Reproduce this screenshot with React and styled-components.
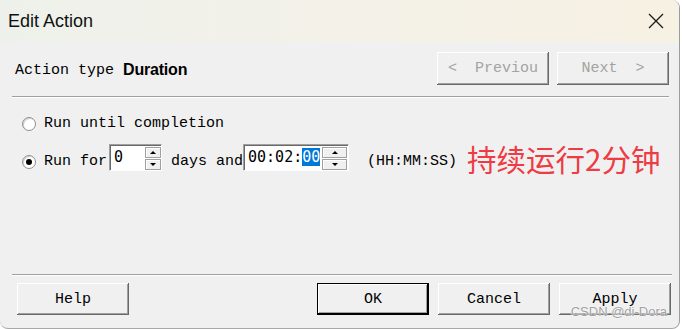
import React from 'react'
import styled, { createGlobalStyle } from 'styled-components'

const mono = `"Liberation Mono", "Courier New", monospace`
const sansMono = `"DejaVu Sans Mono", "Liberation Mono", monospace`
const sans = `"Liberation Sans", Arial, sans-serif`

const GlobalStyle = createGlobalStyle`
  html, body {
    margin: 0;
    padding: 0;
    background: #fff;
  }
  body {
    width: 682px;
    height: 329px;
    overflow: hidden;
  }
`

const Window = styled.div`
  position: relative;
  box-sizing: border-box;
  width: 680px;
  height: 329px;
  display: flex;
  flex-direction: column;
  background: #f0f0f0;
  border-right: 1px solid #9c9c9c;
  border-bottom: 1px solid #a8a8a8;
  border-radius: 0 8px 8px 8px;
  overflow: hidden;
  font-family: ${mono};
  font-size: 15px;
  color: #000;
`

const TitleBar = styled.div`
  height: 42px;
  flex: none;
  display: flex;
  align-items: center;
  justify-content: space-between;
  padding-left: 8px;
  background: linear-gradient(90deg, #eef1eb 0%, #f3f1e8 50%, #f7f1e3 100%);
`

const Title = styled.span`
  font-family: ${sans};
  font-size: 18px;
  color: #111;
`

const CloseButton = styled.div`
  width: 46px;
  height: 42px;
  display: flex;
  align-items: center;
  justify-content: center;
`

const HeaderRow = styled.div`
  display: flex;
  align-items: center;
  padding: 10px 10px 0 15px;
`

const ActionLabel = styled.span`
  white-space: pre;
  margin-top: 3px;
`

const ActionType = styled.span`
  font-family: ${sans};
  font-weight: bold;
  font-size: 16px;
  letter-spacing: -0.2px;
  margin-top: 2px;
`

const NavGroup = styled.div`
  display: flex;
  gap: 8px;
  margin-left: auto;
`

const Button = styled.button`
  box-sizing: border-box;
  width: 112px;
  height: ${({ $tall }) => ($tall ? 33 : 32)}px;
  padding: 0;
  font-family: ${mono};
  font-size: 15px;
  white-space: pre;
  color: ${({ $muted }) => ($muted ? '#a3a3a3' : '#000')};
  background: #f0f0f0;
  border: ${({ $primary }) => ($primary ? '1px solid #000' : 'none')};
  box-shadow: ${({ $primary }) =>
    $primary
      ? 'inset -1px -1px #000, inset 1px 1px #fff, inset -2px -2px #a0a0a0'
      : 'inset -1px -1px #696969, inset 1px 1px #fff, inset -2px -2px #a0a0a0'};
`

const Separator = styled.div`
  height: 0;
  border-top: 1px solid #a0a0a0;
  border-bottom: 1px solid #fff;
  margin: ${({ $margin }) => $margin};
`

const Options = styled.div`
  display: flex;
  flex-direction: column;
  padding: 16px 0 0 22px;
`

const OptionRow = styled.div`
  display: flex;
  align-items: center;
  height: ${({ $h }) => $h}px;
  margin-top: ${({ $mt }) => $mt || 0}px;
`

const Radio = styled.span`
  position: relative;
  box-sizing: border-box;
  width: 14px;
  height: 14px;
  flex: none;
  margin-right: 8px;
  border-radius: 50%;
  background: #fff;
  border: 1px solid #8e8e8e;
  box-shadow: inset 1px 1px #d0d0d0;
  &::after {
    content: '';
    display: ${({ $checked }) => ($checked ? 'block' : 'none')};
    position: absolute;
    left: 3px;
    top: 3px;
    width: 6px;
    height: 6px;
    border-radius: 50%;
    background: #000;
  }
`

const Text = styled.span`
  white-space: pre;
  line-height: 20px;
`

const SpinBox = styled.div`
  box-sizing: border-box;
  width: ${({ $w }) => $w}px;
  height: 27px;
  margin: 0 0 8px ${({ $ml }) => $ml || 0}px;
  display: flex;
  align-items: center;
  background: #fff;
  border-top: 1px solid #a0a0a0;
  border-left: 1px solid #a0a0a0;
  border-right: 1px solid #fff;
  border-bottom: 1px solid #fff;
  box-shadow: inset 1px 1px #696969;
`

const SpinValue = styled.span`
  flex: 1;
  padding-left: 4px;
  font-family: ${sansMono};
  font-size: 15px;
  line-height: 19px;
  white-space: pre;
`

const Selected = styled.span`
  background: #0078d7;
  color: #fff;
`

const SpinButtons = styled.div`
  display: flex;
  flex-direction: column;
  gap: 1px;
  width: ${({ $w }) => $w}px;
  margin-right: ${({ $mr }) => $mr || 0}px;
  margin-top: 1px;
`

const SpinButton = styled.div`
  box-sizing: border-box;
  height: 11px;
  display: flex;
  align-items: center;
  justify-content: center;
  background: #f0f0f0;
  border: 1px solid #a0a0a0;
  box-shadow: inset 1px 1px #fff;
`

const Arrow = styled.span`
  width: 0;
  height: 0;
  border-left: 3px solid transparent;
  border-right: 3px solid transparent;
  ${({ $down }) =>
    $down ? 'border-top: 3px solid #000;' : 'border-bottom: 3px solid #000;'}
`

const Note = styled.span`
  margin: 0 0 5px 10px;
  font-family: "Noto Sans CJK SC", sans-serif;
  font-size: 29.5px;
  line-height: 1;
  color: #ee3b44;
  white-space: nowrap;
`

const Spacer = styled.div`
  flex: 1;
`

const Footer = styled.div`
  display: flex;
  align-items: center;
  padding: 7px 8px 13px 17px;
`

const FooterGroup = styled.div`
  display: flex;
  gap: 9px;
  margin-left: auto;
`

const Watermark = styled.span`
  position: absolute;
  right: 12px;
  bottom: 9px;
  font-family: ${sans};
  font-size: 13px;
  color: #a0a0a0;
  text-shadow: 0 0 2px #fff, 0 0 1px #fff;
`

function Spin({ width, marginLeft, buttonWidth, buttonMargin, children }) {
  return (
    <SpinBox $w={width} $ml={marginLeft}>
      <SpinValue>{children}</SpinValue>
      <SpinButtons $w={buttonWidth} $mr={buttonMargin}>
        <SpinButton><Arrow /></SpinButton>
        <SpinButton><Arrow $down /></SpinButton>
      </SpinButtons>
    </SpinBox>
  )
}

export default function App() {
  return (
    <>
      <GlobalStyle />
      <Window>
        <TitleBar>
          <Title>Edit Action</Title>
          <CloseButton>
            <svg width="16" height="16" viewBox="0 0 16 16">
              <path d="M1 1 L15 15 M15 1 L1 15" stroke="#1a1a1a" strokeWidth="1.3" fill="none" />
            </svg>
          </CloseButton>
        </TitleBar>

        <HeaderRow>
          <ActionLabel>Action type </ActionLabel>
          <ActionType>Duration</ActionType>
          <NavGroup>
            <Button $muted $tall>{'<  Previou'}</Button>
            <Button $muted $tall>{'Next  >'}</Button>
          </NavGroup>
        </HeaderRow>

        <Separator $margin="11px 10px 0 12px" />

        <Options>
          <OptionRow $h={20}>
            <Radio />
            <Text>Run until completion</Text>
          </OptionRow>
          <OptionRow $h={35} $mt={10}>
            <Radio $checked />
            <Text>Run for</Text>
            <Spin width={53} marginLeft={2} buttonWidth={16}>0</Spin>
            <Text> days and</Text>
            <Spin width={106} buttonWidth={25} buttonMargin={1}>
              00:02:<Selected>00</Selected>
            </Spin>
            <Text>{'  (HH:MM:SS)'}</Text>
            <Note>持续运行2分钟</Note>
          </OptionRow>
        </Options>

        <Spacer />

        <Separator $margin="0 7px 0 12px" />

        <Footer>
          <Button>Help</Button>
          <FooterGroup>
            <Button $primary>OK</Button>
            <Button>Cancel</Button>
            <Button>Apply</Button>
          </FooterGroup>
        </Footer>

        <Watermark>CSDN @di-Dora</Watermark>
      </Window>
    </>
  )
}
